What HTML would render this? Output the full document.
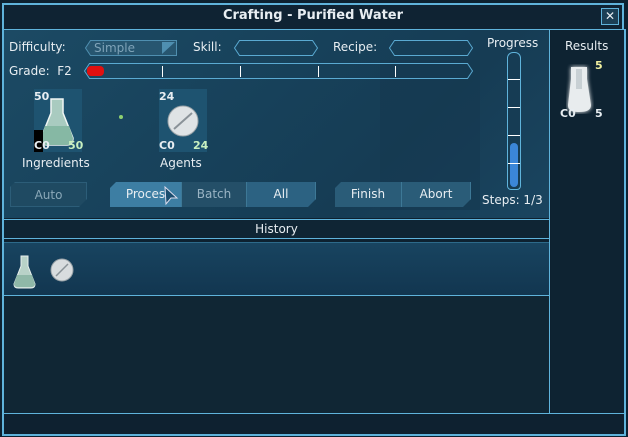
<!DOCTYPE html>
<html><head><meta charset="utf-8"><style>
*{margin:0;padding:0;box-sizing:border-box}
body{width:628px;height:437px;overflow:hidden;background:#0d2130;font-family:"DejaVu Sans","Liberation Sans",sans-serif;color:#e8eef2;font-size:12px;position:relative}
.a{position:absolute}
.t{position:absolute;white-space:nowrap}
.btn{position:absolute;height:25px;top:182px;background:#23506a;color:#e8eef2;text-align:center;line-height:25px;font-size:12px;border-right:1px solid #3d7896}
.num{position:absolute;font-size:11px;font-weight:bold}
</style></head><body>
<div class="a" style="left:3px;top:30px;width:547px;height:188px;background:linear-gradient(135deg,#1c4a64 0%,#17415a 45%,#163c54 70%,#1a4560 100%)"></div>
<div class="a" style="left:380px;top:60px;width:100px;height:150px;background:#153850;opacity:.6"></div>
<div class="a" style="left:2px;top:3px;width:622px;height:27px;background:#0f2333;border-top:2px solid #5fb3db;border-left:2px solid #5fb3db;border-right:2px solid #5fb3db"></div>
<div class="a" style="left:2px;top:29px;width:624px;height:1px;background:#5fb3db"></div>
<div class="t" style="left:0;width:626px;text-align:center;top:8px;font-size:13px;font-weight:bold">Crafting - Purified Water</div>
<div class="a" style="left:601px;top:8px;width:18px;height:17px;border:1px solid #5fb3db;background:#1b3f55;text-align:center;line-height:15px;font-size:12px;font-weight:bold">✕</div>
<div class="a" style="left:2px;top:30px;width:2px;height:406px;background:#5fb3db"></div>
<div class="a" style="left:624px;top:30px;width:2px;height:406px;background:#5fb3db"></div>
<div class="a" style="left:2px;top:434px;width:624px;height:2px;background:#5fb3db"></div>
<div class="a" style="left:551px;top:30px;width:73px;height:383px;background:#0e2332"></div>
<div class="a" style="left:549px;top:30px;width:1px;height:383px;background:#5fb3db"></div>
<div class="a" style="left:4px;top:219px;width:545px;height:1px;background:#5fb3db"></div>
<div class="a" style="left:4px;top:220px;width:545px;height:18px;background:#0f2534"></div>
<div class="t" style="left:4px;width:545px;text-align:center;top:222px">History</div>
<div class="a" style="left:4px;top:238px;width:545px;height:1px;background:#5fb3db"></div>
<div class="a" style="left:4px;top:242px;width:545px;height:53px;background:linear-gradient(180deg,#184460,#123650);border-top:1px solid #2d6a8a"></div>
<div class="a" style="left:4px;top:295px;width:545px;height:1px;background:#5fb3db"></div>
<div class="a" style="left:4px;top:296px;width:545px;height:117px;background:#102634"></div>
<div class="a" style="left:4px;top:413px;width:620px;height:1px;background:#5fb3db"></div>
<div class="a" style="left:4px;top:414px;width:620px;height:20px;background:#0e2130"></div>
<svg class="a" style="left:12px;top:253px" width="26" height="36"><path d="M9 3h7v10l7 18c0 3-2 4-4 4H6c-2 0-4-1-4-4l7-18z" fill="#b8d2c8" stroke="#e8f0ee" stroke-width="1"/><path d="M5 22h15l3 9c0 2-2 3-4 3H6c-2 0-4-1-4-3z" fill="#8fb8a8"/></svg>
<svg class="a" style="left:49px;top:257px" width="26" height="26"><circle cx="13" cy="13" r="11" fill="#d8dcde" stroke="#9aa3a8"/><path d="M7 19L19 7" stroke="#8a9298" stroke-width="1.5"/></svg>
<!-- boxes -->
<svg class="a" style="left:0;top:0" width="628" height="220">
<g fill="none" stroke="#5aaad2" stroke-width="1">
<polygon points="90.5,40.5 176.5,40.5 176.5,55.5 90.5,55.5 85.5,48" fill="#275670" stroke="#4f8fb0"/>
<polygon points="239.5,40.5 312.5,40.5 317.5,48 312.5,55.5 239.5,55.5 234.5,48"/>
<polygon points="394.5,40.5 467.5,40.5 472.5,48 467.5,55.5 394.5,55.5 389.5,48"/>
<polygon points="89.5,63.5 467.5,63.5 472.5,71 467.5,78.5 89.5,78.5 84.5,71"/>
</g>
<polygon points="162,42 175,42 162,54" fill="#4f8fb0"/>
</svg>
<div class="t" style="left:9px;top:40px">Difficulty:</div>
<div class="t" style="left:94px;top:41px;color:#7fa3b8">Simple</div>
<div class="t" style="left:193px;top:40px">Skill:</div>
<div class="t" style="left:333px;top:40px">Recipe:</div>
<div class="t" style="left:9px;top:64px">Grade:&nbsp; F2</div>
<div class="a" style="left:87px;top:66px;width:17px;height:10px;background:#e01010;border-radius:4px"></div>
<div class="a" style="left:162px;top:66px;width:1px;height:11px;background:#fff"></div>
<div class="a" style="left:240px;top:66px;width:1px;height:11px;background:#fff"></div>
<div class="a" style="left:318px;top:66px;width:1px;height:11px;background:#fff"></div>
<div class="a" style="left:395px;top:66px;width:1px;height:11px;background:#fff"></div>
<div class="a" style="left:34px;top:89px;width:48px;height:63px;background:#1e5370"></div>
<svg class="a" style="left:38px;top:96px" width="38" height="52"><path d="M13 3h12v14l10 25c0 5-3 7-6 7H9c-3 0-6-2-6-7l10-25z" fill="#a9cbc0" stroke="#f0f6f4" stroke-width="1.5"/><path d="M7 30h24l4 12c0 5-3 7-6 7H9c-3 0-6-2-6-7z" fill="#86b8a4"/></svg>
<div class="a" style="left:34px;top:130px;width:9px;height:22px;background:#000"></div>
<div class="num" style="left:34px;top:90px">50</div>
<div class="num" style="left:34px;top:139px">C0</div>
<div class="num" style="left:68px;top:139px;color:#c8f0c0">50</div>
<div class="a" style="left:119px;top:115px;width:4px;height:4px;background:#8fd070;border-radius:2px"></div>
<div class="a" style="left:159px;top:89px;width:48px;height:63px;background:#1e5370"></div>
<svg class="a" style="left:166px;top:104px" width="34" height="34"><circle cx="17" cy="17" r="15" fill="#dfe3e5" stroke="#9aa3a8"/><path d="M8 25L26 9" stroke="#8a9298" stroke-width="2"/></svg>
<div class="num" style="left:159px;top:90px">24</div>
<div class="num" style="left:159px;top:139px">C0</div>
<div class="num" style="left:193px;top:139px;color:#c8f0c0">24</div>
<div class="t" style="left:22px;top:156px">Ingredients</div>
<div class="t" style="left:160px;top:156px">Agents</div>
<div class="btn" style="left:10px;width:77px;background:#1f4a62;color:#8aa8b8;border:1px solid #2c5d78;clip-path:polygon(5px 0,100% 0,100% calc(100% - 8px),calc(100% - 8px) 100%,0 100%,0 5px)">Auto</div>
<div class="btn" style="left:110px;width:72px;background:#3d7ea3;clip-path:polygon(6px 0,100% 0,100% 100%,0 100%,0 6px)">Proces</div>
<svg class="a" style="left:163px;top:186px" width="16" height="20"><path d="M2 1L14 12H8L3 18z" fill="#1b4d6e" stroke="#dde" stroke-width="1"/></svg>
<div class="btn" style="left:182px;width:65px;background:#244f68;color:#9ab4c4">Batch</div>
<div class="btn" style="left:247px;width:69px;background:#2c6282;clip-path:polygon(0 0,100% 0,100% calc(100% - 8px),calc(100% - 8px) 100%,0 100%)">All</div>
<div class="btn" style="left:335px;width:67px;background:#2a5c78;clip-path:polygon(6px 0,100% 0,100% 100%,0 100%,0 6px)">Finish</div>
<div class="btn" style="left:402px;width:69px;background:#2a5c78;clip-path:polygon(0 0,100% 0,100% calc(100% - 8px),calc(100% - 8px) 100%,0 100%)">Abort</div>
<div class="t" style="left:487px;top:36px">Progress</div>
<div class="a" style="left:507px;top:52px;width:14px;height:138px;border:1px solid #5fb3db;border-radius:6px 6px 4px 4px;background:#163c54"></div>
<div class="a" style="left:510px;top:143px;width:8px;height:44px;background:#3b86d8;border-radius:4px"></div>
<div class="a" style="left:508px;top:79px;width:12px;height:1px;background:#fff"></div>
<div class="a" style="left:508px;top:107px;width:12px;height:1px;background:#fff"></div>
<div class="a" style="left:508px;top:135px;width:12px;height:1px;background:#fff"></div>
<div class="a" style="left:508px;top:163px;width:12px;height:1px;background:#fff"></div>
<div class="t" style="left:482px;top:193px">Steps: 1/3</div>
<div class="t" style="left:565px;top:39px">Results</div>
<svg class="a" style="left:566px;top:64px" width="28" height="50"><path d="M5 3h16v12l4 26c0 5-4 7-12 7S2 46 2 41l3-26z" fill="#e8ecee" filter="drop-shadow(0 0 2px #fff)"/><path d="M10 5h6v20h-6z" fill="#c8d0d4"/></svg>
<div class="num" style="left:595px;top:59px;color:#f0f0a0">5</div>
<div class="num" style="left:560px;top:107px">C0</div>
<div class="num" style="left:595px;top:107px">5</div>
</body></html>
